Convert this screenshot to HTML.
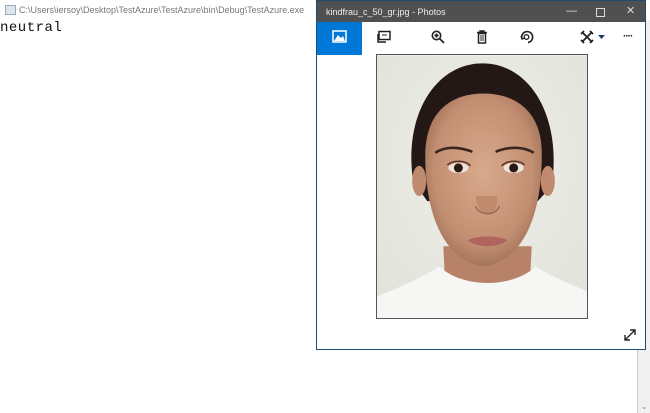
<!DOCTYPE html>
<html><head><style>
html,body{margin:0;padding:0;width:650px;height:413px;overflow:hidden;background:#fff;position:relative;font-family:"Liberation Sans",sans-serif}
.ctitle{position:absolute;left:0;top:0;width:650px;height:20px;font-size:9px;color:#777;}
.ctitle span{position:absolute;left:19px;top:5px}
.cicon{position:absolute;left:5px;top:5px;width:9px;height:8px;border:1px solid #9ab;background:#dde6ee}
.neutral{position:absolute;left:0;top:20px;font-family:"Liberation Mono",monospace;font-size:14px;color:#111;letter-spacing:0.5px}
.sb{position:absolute;left:637px;top:20px;width:13px;height:393px;background:#f0f0f0;border-left:1px solid #ccc}
.sbarrow{position:absolute;left:641px;top:402px;font-size:8px;color:#888}
.win{position:absolute;left:316px;top:0;width:330px;height:350px;background:#fff;border:1px solid #1f4b70;box-sizing:border-box}
.tb{height:21px;background:#505050;color:#eee;font-size:9px;position:relative}
.tb .t{position:absolute;left:9px;top:6px}
.tb .b{position:absolute;top:4px;font-size:11px;color:#ddd}
.tool{position:relative;height:33px}
.act{position:absolute;left:0;top:0;width:45px;height:33px;background:#0078d7}
.ic{position:absolute;top:8px}
.photo{position:absolute;left:59px;top:53px;width:212px;height:265px;border:1px solid #555;box-sizing:border-box;overflow:hidden}
</style></head><body>
<div class="ctitle"><div class="cicon"></div><span>C:\Users\iersoy\Desktop\TestAzure\TestAzure\bin\Debug\TestAzure.exe</span></div>
<div class="neutral">neutral</div>
<div class="sb"></div><div class="sbarrow">⌄</div>
<div class="win">
 <div class="tb"><span class="t">kindfrau_c_50_gr.jpg - Photos</span>
  <span class="b" style="left:249px">—</span>
  <span class="b" style="left:279px;width:7px;height:7px;border:1px solid #ddd;top:7px"></span>
  <span class="b" style="left:309px;top:3px">✕</span></div>
 <div class="tool">
  <div class="act"><svg class="ic" style="left:15px" width="15" height="13" viewBox="0 0 15 13"><rect x="1" y="1" width="13" height="11" fill="none" stroke="#fff" stroke-width="1.5"/><path d="M2 11 L6 5 L9 8 L11 6 L13 11Z" fill="#fff"/></svg></div>
  <svg class="ic" style="left:60px" width="14" height="13" viewBox="0 0 14 13"><rect x="2" y="1.5" width="11" height="8" fill="none" stroke="#222" stroke-width="1.5"/><path d="M1 4 V12 H9" fill="none" stroke="#222" stroke-width="1.5"/><path d="M5 5h5" stroke="#222"/></svg>
  <svg class="ic" style="left:114px" width="14" height="14" viewBox="0 0 14 14"><circle cx="5.5" cy="5.5" r="4.2" fill="none" stroke="#222" stroke-width="1.6"/><path d="M3.5 5.5h4M5.5 3.5v4M8.5 8.5l4.5 4.5" stroke="#222" stroke-width="1.8"/></svg>
  <svg class="ic" style="left:159px" width="12" height="14" viewBox="0 0 12 14"><path d="M1 2.5h10M4 2.5V1h4v1.5" stroke="#222" stroke-width="1.4" fill="none"/><rect x="2.5" y="3.5" width="7" height="9.5" fill="none" stroke="#222" stroke-width="1.5"/><path d="M5 5v6M7 5v6" stroke="#222"/></svg>
  <svg class="ic" style="left:203px" width="14" height="14" viewBox="0 0 14 14"><path d="M2 9 A5.5 5.5 0 1 1 8 12.5" fill="none" stroke="#222" stroke-width="1.6"/><circle cx="6.5" cy="7" r="2.3" fill="none" stroke="#222" stroke-width="1.3"/><path d="M1 6l1 3 3-1" fill="none" stroke="#222" stroke-width="1.3"/></svg>
  <svg class="ic" style="left:263px" width="14" height="14" viewBox="0 0 14 14"><path d="M2 2l10 10M12 2L2 12M4 1l-3 3M10 13l3-3M10 1l3 3M4 13l-3-3" stroke="#222" stroke-width="1.8"/></svg>
  <svg class="ic" style="left:281px;top:12px" width="7" height="6" viewBox="0 0 7 6"><path d="M0 1l3.5 4L7 1" fill="#1f3b6a"/></svg>
  <span style="position:absolute;left:306px;top:9px;font-size:10px;color:#222;letter-spacing:-1px;font-weight:bold">····</span>
 </div>
 <div class="photo"><svg width="212" height="265" viewBox="0 0 211 263">
  <defs>
   <radialGradient id="bg" cx="0.5" cy="0.4" r="0.8"><stop offset="0" stop-color="#eeefe8"/><stop offset="1" stop-color="#e0e1d9"/></radialGradient>
   <radialGradient id="sk" cx="0.5" cy="0.45" r="0.6"><stop offset="0" stop-color="#d9a98c"/><stop offset="0.7" stop-color="#c38f72"/><stop offset="1" stop-color="#9a6b52"/></radialGradient>
  </defs>
  <rect width="211" height="263" fill="url(#bg)"/>
  <path d="M36 125 C26 60 58 8 105 8 C152 8 184 60 174 130 L160 145 L50 145Z" fill="#231815"/>
  <path d="M66 190 L68 230 L152 230 L154 190Z" fill="#b88268"/>
  <path d="M0 263 V240 C30 228 50 218 62 210 C85 232 135 232 158 210 C172 220 195 228 211 236 V263Z" fill="#f6f6f4"/>
  <ellipse cx="42" cy="125" rx="7" ry="15" fill="#bf8a6e"/><ellipse cx="170" cy="125" rx="7" ry="15" fill="#bf8a6e"/>
  <path d="M48 100 C48 55 75 38 106 38 C137 38 165 55 164 100 C164 160 145 205 106 210 C68 205 48 160 48 100Z" fill="url(#sk)"/>
  <path d="M58 97 C68 90 82 91 95 96 M118 96 C130 91 145 90 156 97" stroke="#3a2620" stroke-width="2.5" fill="none"/>
  <ellipse cx="81" cy="112" rx="10" ry="5" fill="#efe3dc"/><ellipse cx="136" cy="112" rx="10" ry="5" fill="#efe3dc"/>
  <circle cx="81" cy="112" r="4.5" fill="#2a1a14"/><circle cx="136" cy="112" r="4.5" fill="#2a1a14"/>
  <path d="M70 109 C76 104 88 104 93 110 M124 110 C130 104 142 104 147 109" stroke="#5a3528" stroke-width="1.5" fill="none"/>
  <path d="M98 140 C100 152 104 158 110 158 C116 158 120 152 120 140" fill="#c08a6c"/>
  <path d="M98 150 C102 160 118 160 122 150" stroke="#9a6a52" stroke-width="1.5" fill="none"/>
  <path d="M90 184 C100 179 120 179 130 184 C120 192 100 192 90 184Z" fill="#b0645e"/>
 </svg></div>
 <svg style="position:absolute;left:306px;top:327px" width="14" height="14" viewBox="0 0 14 14"><path d="M2 12L12 2M7 2h5v5M2 7v5h5" fill="none" stroke="#222" stroke-width="1.4"/></svg>
</div>
</body></html>
